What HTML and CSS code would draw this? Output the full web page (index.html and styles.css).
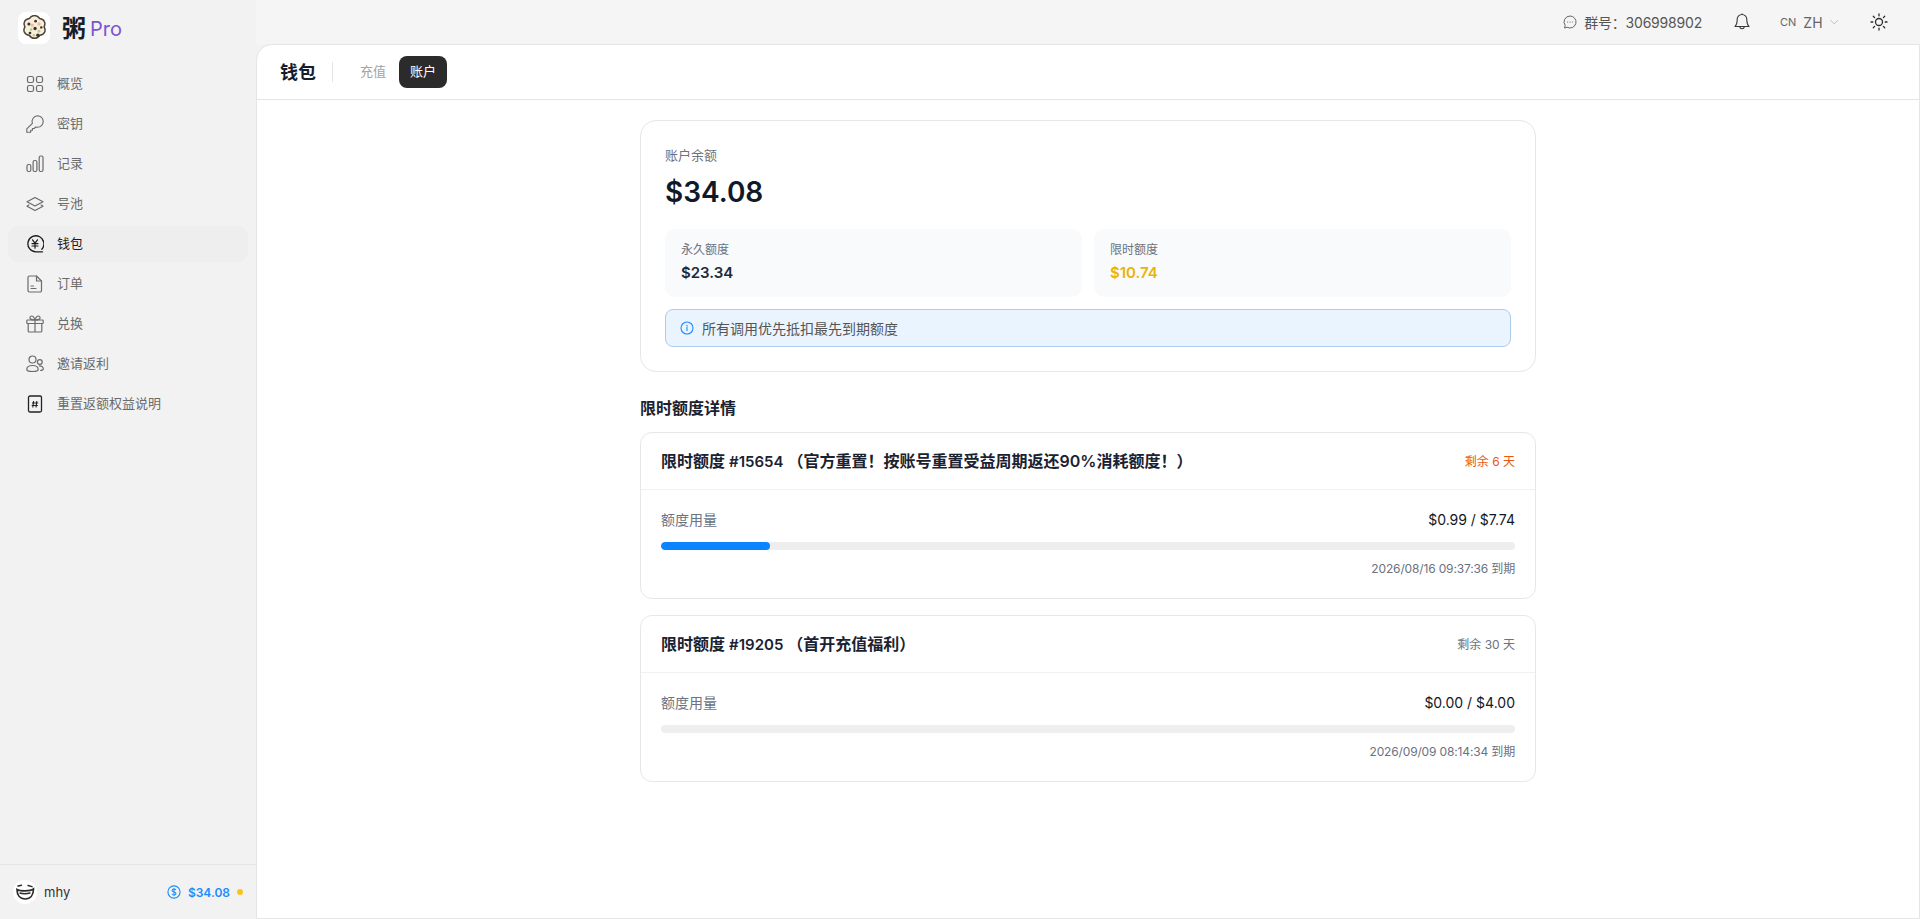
FILE: index.html
```html
<!DOCTYPE html>
<html lang="zh-CN">
<head>
  <meta charset="UTF-8" />
  <meta name="viewport" content="width=device-width, initial-scale=1.0"/>
  <title>钱包</title>
  <link rel="stylesheet" href="styles.css">
</head>
<body>
  <div class="app">
    <!-- 侧边栏 -->
    <aside class="sidebar">
      <div class="brand">
        <div class="logo">
          <svg width="27" height="27" viewBox="1.500 1 23 24">
            <path d="M13 1.500c2.200 0 3.600 1.200 4.600 2.600 1.800.2 3.600 1 4.300 2.900.7 1.700.3 3.300-.4 4.600.9 1.500 1.300 3.200.4 4.900-.9 1.700-2.500 2.400-4.200 2.500-1 1.500-2.500 2.700-4.700 2.700s-3.700-1.200-4.700-2.700c-1.700-.1-3.300-.8-4.200-2.500-.9-1.700-.5-3.400.4-4.900-.7-1.300-1.100-2.900-.4-4.600.7-1.900 2.500-2.700 4.300-2.900 1-1.400 2.400-2.600 4.600-2.600z" fill="#f8eeda" stroke="#4a4438" stroke-width="1.300"/>
            <circle cx="8" cy="9" r="1.400" fill="#3b332a"/><circle cx="14" cy="6.500" r="1.200" fill="#3b332a"/>
            <circle cx="13.500" cy="13" r="1.500" fill="#3b332a"/><circle cx="19" cy="12" r="1.100" fill="#3b332a"/>
            <circle cx="9" cy="17" r="1.200" fill="#3b332a"/><circle cx="16" cy="19" r="1.500" fill="#3b332a"/>
            <circle cx="11" cy="10" r="1.400" fill="#f2b8a8"/><circle cx="17" cy="9" r="1.500" fill="#f2b8a8"/>
            <circle cx="10" cy="14" r="1.200" fill="#b5cf8a"/><circle cx="17" cy="15.500" r="1.300" fill="#b5cf8a"/>
            <circle cx="12.500" cy="19" r="1.200" fill="#b5cf8a"/>
          </svg>
        </div>
        <span class="brand-name">粥</span>
        <span class="brand-pro">Pro</span>
      </div>

      <nav class="nav">
        <a class="nav-item">
          <svg class="nav-icon" viewBox="0 0 18 18" fill="none" stroke="currentColor" stroke-width="1.200"><rect x="1.500" y="1.500" width="6" height="6" rx="1.800"/><rect x="10.500" y="1.500" width="6" height="6" rx="1.800"/><rect x="1.500" y="10.500" width="6" height="6" rx="1.800"/><rect x="10.500" y="10.500" width="6" height="6" rx="1.800"/></svg>
          <span>概览</span>
        </a>
        <a class="nav-item">
          <svg class="nav-icon" viewBox="0 0 18 18" fill="none" stroke="currentColor" stroke-width="1.100" stroke-linejoin="round"><path d="M11.500.8a5.700 5.700 0 0 1 0 11.400c-.6 0-1.200-.1-1.700-.3L8.200 13.500H6.500v1.800H4.700v1.900H.8v-3.300l5.600-5.600a5.700 5.700 0 0 1 5.100-7.500z"/></svg>
          <span>密钥</span>
        </a>
        <a class="nav-item">
          <svg class="nav-icon" viewBox="0 0 18 18" fill="none" stroke="currentColor" stroke-width="1.200"><rect x="1" y="9.500" width="3.800" height="7" rx="1.500"/><rect x="7.100" y="5.500" width="3.800" height="11" rx="1.500"/><rect x="13.200" y="1" width="3.800" height="15.500" rx="1.500"/></svg>
          <span>记录</span>
        </a>
        <a class="nav-item">
          <svg class="nav-icon" viewBox="0 0 18 18" fill="none" stroke="currentColor" stroke-width="1.200" stroke-linejoin="round" stroke-linecap="round"><path d="M9 2.500l8 4.300-8 4.200-8-4.200z"/><path d="M2.800 10L1 11.200l8 4.300 8-4.300L15.200 10"/></svg>
          <span>号池</span>
        </a>
        <a class="nav-item active">
          <svg class="nav-icon" viewBox="0 0 18 18" fill="none" stroke="currentColor" stroke-width="1.300" stroke-linecap="round"><path d="M16.500 16.800h-6.700a8 8 0 1 1 6-2.600"/><path d="M6.500 4.800L9 8.200l2.500-3.400M6 8.600h6M6 11h6M9 8.200v5" stroke-width="1.200"/></svg>
          <span>钱包</span>
        </a>
        <a class="nav-item">
          <svg class="nav-icon" viewBox="0 0 18 18" fill="none" stroke="currentColor" stroke-width="1.200" stroke-linejoin="round" stroke-linecap="round"><path d="M3.500 1h7l5 5v9.500a1.500 1.500 0 0 1-1.500 1.500H3.500A1.500 1.500 0 0 1 2 15.500v-13A1.500 1.500 0 0 1 3.500 1z"/><path d="M10.500 1v5h5M5 13.500h5M5 11h2.500"/></svg>
          <span>订单</span>
        </a>
        <a class="nav-item">
          <svg class="nav-icon" viewBox="0 0 18 18" fill="none" stroke="currentColor" stroke-width="1.200" stroke-linejoin="round"><rect x=".8" y="5" width="16.400" height="3.500" rx=".8"/><path d="M2.200 8.500v7.500a1 1 0 0 0 1 1h11.600a1 1 0 0 0 1-1V8.500M9 5v12M9 5S7.800 1 5.500 1C3.800 1 3.600 3 4.500 4s4.500 1 4.500 1zm0 0s1.200-4 3.500-4c1.700 0 1.900 2 1 3s-4.500 1-4.500 1z"/></svg>
          <span>兑换</span>
        </a>
        <a class="nav-item">
          <svg class="nav-icon" viewBox="0 0 18 18" fill="none" stroke="currentColor" stroke-width="1.200"><circle cx="6.500" cy="4.500" r="3.500"/><circle cx="13.800" cy="7" r="2.400"/><path d="M.8 14.500c0-2.700 2.500-4 5.700-4s5.700 1.300 5.700 4c0 1.500-2.500 2-5.700 2s-5.700-.5-5.700-2zM12.800 11c2.600-.3 4.500.8 4.500 2.800 0 1.200-1.300 1.700-3.200 1.700"/></svg>
          <span>邀请返利</span>
        </a>
        <a class="nav-item">
          <svg class="nav-icon hash" viewBox="0 0 18 18" fill="none" stroke="currentColor"><rect x="2.500" y="1" width="13" height="16" rx="1.500" stroke-width="1.300"/><path d="M7.600 6L6.800 12.500M10.800 6L10 12.500M6 8h6.200M5.700 10.500h6.200" stroke-width="1.100"/></svg>
          <span>重置返额权益说明</span>
        </a>
      </nav>

      <div class="side-footer">
        <div class="user">
          <div class="avatar">
            <svg width="24" height="24" viewBox="0 0 24 24" fill="none" stroke="#2b2b2b" stroke-width="1.400" stroke-linecap="round">
              <path d="M5 6l3.500-.8M15 5.500l4 1.200"/>
              <path d="M4 9.500c3 1.800 13 2 16.500-.5 0 6-3 10-8.300 10S4 15 4 9.500z" stroke-width="1.700"/>
              <path d="M7 13c2 1 7 1 10 0"/>
            </svg>
          </div>
          <span class="user-name">mhy</span>
        </div>
        <div class="balance">
          <svg width="14" height="14" viewBox="0 0 15 15" fill="none" stroke="#1a8cff" stroke-width="1.200"><circle cx="7.500" cy="7.500" r="6.500"/><path d="M9.600 5.400c-.4-.8-1.200-1.100-2.100-1.100-1.200 0-2.100.6-2.100 1.600 0 2.200 4.300 1 4.300 3.200 0 1-.9 1.600-2.200 1.600-1 0-1.900-.4-2.300-1.200M7.500 3.200v8.600" stroke-width="1.100"/></svg>
          <span class="balance-num">$34.08</span>
          <span class="balance-dot"></span>
        </div>
      </div>
    </aside>

    <div class="right">
      <!-- 顶部栏 -->
      <header class="topbar">
        <div class="group-info">
          <svg width="14" height="14" viewBox="0 0 14 14" fill="none" stroke="#666" stroke-width="1"><path d="M7 1a6 6 0 1 1-2.800 11.300L1.500 13l.7-2.500A6 6 0 0 1 7 1z"/><circle cx="4.600" cy="7" r=".6" fill="#666" stroke="none"/><circle cx="7" cy="7" r=".6" fill="#666" stroke="none"/><circle cx="9.400" cy="7" r=".6" fill="#666" stroke="none"/></svg>
          <span>群号：306998902</span>
        </div>
        <svg class="bell" width="16" height="18" viewBox="0 0 16 18" fill="none" stroke="#3a3a3a" stroke-width="1.100" stroke-linejoin="round"><path d="M8 1.500a4.800 4.800 0 0 1 4.800 4.800c0 4 .7 5.700 2.200 7.200H1c1.500-1.500 2.200-3.200 2.200-7.200A4.800 4.800 0 0 1 8 1.500z"/><path d="M5.800 13.500a2.200 2.200 0 0 0 4.400 0"/><path d="M8 .5v1"/></svg>
        <div class="lang">
          <span class="lang-flag">CN</span>
          <span class="lang-code">ZH</span>
          <svg width="9" height="6" viewBox="0 0 9 6" fill="none" stroke="#bbb" stroke-width="1"><path d="M.5 1l4 4 4-4"/></svg>
        </div>
        <svg class="sun" width="18" height="18" viewBox="0 0 18 18" fill="none" stroke="#2b2b2b" stroke-width="1.300" stroke-linecap="round"><circle cx="9" cy="9" r="3.500"/><path d="M9 1v1.800M9 15.200V17M1 9h1.800M15.200 9H17M3.300 3.300l1.300 1.300M13.400 13.400l1.300 1.300M3.300 14.700l1.300-1.300M13.400 4.600l1.300-1.300"/></svg>
      </header>

      <main class="panel">
        <div class="page-head">
          <h1 class="page-title">钱包</h1>
          <div class="head-line"></div>
          <div class="tabs">
            <a class="tab">充值</a>
            <a class="tab current">账户</a>
          </div>
        </div>

        <div class="content">
          <!-- 余额卡片 -->
          <section class="card balance-card">
            <div class="balance-label">账户余额</div>
            <div class="balance-total">$34.08</div>
            <div class="quota-row">
              <div class="quota-box">
                <div class="quota-label">永久额度</div>
                <div class="quota-value">$23.34</div>
              </div>
              <div class="quota-box">
                <div class="quota-label">限时额度</div>
                <div class="quota-value amber">$10.74</div>
              </div>
            </div>
            <div class="notice">
              <svg width="14" height="14" viewBox="0 0 14 14" fill="none" stroke="#1a8cff" stroke-width="1.100"><circle cx="7" cy="7" r="6"/><path d="M7 6.200v3.200M7 4.200v.8" stroke-linecap="round"/></svg>
              <span>所有调用优先抵扣最先到期额度</span>
            </div>
          </section>

          <h2 class="section-title">限时额度详情</h2>

          <section class="card quota-card">
            <div class="quota-head">
              <div class="quota-name">限时额度 <span class="quota-id">#15654</span> （官方重置！按账号重置受益周期返还90%消耗额度！）</div>
              <div class="days urgent">剩余 6 天</div>
            </div>
            <div class="quota-body">
              <div class="usage-row">
                <span class="usage-label">额度用量</span>
                <span class="usage-num">$0.99 / $7.74</span>
              </div>
              <div class="track"><div class="fill" style="width: 12.800%"></div></div>
              <div class="expire">2026/08/16 09:37:36 到期</div>
            </div>
          </section>

          <section class="card quota-card">
            <div class="quota-head">
              <div class="quota-name">限时额度 <span class="quota-id">#19205</span> （首开充值福利）</div>
              <div class="days">剩余 30 天</div>
            </div>
            <div class="quota-body">
              <div class="usage-row">
                <span class="usage-label">额度用量</span>
                <span class="usage-num">$0.00 / $4.00</span>
              </div>
              <div class="track"></div>
              <div class="expire">2026/09/09 08:14:34 到期</div>
            </div>
          </section>
        </div>
      </main>
    </div>
  </div>
</body>
</html>
```

FILE: styles.css
```css
* {
  box-sizing: border-box;
  margin: 0;
  padding: 0;
}
html, body {
  height: 100%;
}
body {
  font-family: Inter, "Noto Sans CJK SC", sans-serif;
  background-color: #f2f2f2;
  color: #111827;
  overflow: hidden;
}
.app {
  display: flex;
  height: 919px;
}

/* 侧边栏 */
.sidebar {
  width: 256px;
  flex-shrink: 0;
  display: flex;
  flex-direction: column;
  background-color: #f2f2f2;
}
.brand {
  height: 66px;
  padding: 12px 0 0 18px;
  display: flex;
  align-items: flex-start;
}
.logo {
  width: 32px;
  height: 32px;
  background-color: #fff;
  border-radius: 8px;
  display: flex;
  align-items: center;
  justify-content: center;
  margin-right: 12px;
}
.brand-name {
  font-size: 24px;
  line-height: 32px;
  font-weight: 700;
  color: #161d2b;
  margin: 1px 4px 0 0;
}
.brand-pro {
  font-size: 20px;
  line-height: 32px;
  color: #7a55d0;
  margin-top: 1px;
}
.nav {
  flex: 1;
  display: flex;
  flex-direction: column;
  gap: 4px;
  padding: 0 8px;
}
.nav-item {
  height: 36px;
  display: flex;
  align-items: center;
  padding-left: 18px;
  border-radius: 10px;
  font-size: 13px;
  color: #6b6b6b;
}
.nav-item span {
  margin-bottom: 4px;
}
.nav-item.active {
  background-color: #eeeeee;
  color: #1c1c1c;
}
.nav-icon {
  width: 18px;
  height: 18px;
  margin-right: 13px;
  flex-shrink: 0;
}
.nav-icon.hash {
  color: #222;
}
.side-footer {
  height: 55px;
  border-top: 1px solid #e5e5e5;
  padding: 0 13px;
  display: flex;
  align-items: center;
  justify-content: space-between;
}
.user {
  display: flex;
  align-items: center;
  gap: 7px;
}
.avatar {
  width: 24px;
  height: 24px;
  background-color: #fff;
  border-radius: 50%;
  overflow: hidden;
}
.user-name {
  font-size: 13px;
  color: #333;
}
.balance {
  display: flex;
  align-items: center;
}
.balance-num {
  font-size: 12px;
  font-weight: 600;
  color: #1a8cff;
  margin-left: 7px;
}
.balance-dot {
  width: 6px;
  height: 6px;
  border-radius: 50%;
  background-color: #fcc419;
  margin-left: 7px;
}

/* 右侧 */
.right {
  flex: 1;
  min-width: 0;
  display: flex;
  flex-direction: column;
}
.topbar {
  height: 44px;
  flex-shrink: 0;
  display: flex;
  align-items: center;
  justify-content: flex-end;
  background-color: #f5f5f5;
  padding-right: 32px;
  font-size: 14px;
  color: #555;
}
.group-info {
  display: flex;
  align-items: center;
  gap: 7px;
  letter-spacing: -0.2px;
}
.bell {
  margin-left: 32px;
}
.lang {
  display: flex;
  align-items: center;
  margin-left: 30px;
  width: 58px;
}
.lang-flag {
  font-size: 11px;
  color: #666;
  margin-right: 7px;
}
.lang-code {
  font-size: 14px;
  color: #666;
  margin-right: 7px;
}
.sun {
  margin-left: 32px;
}
.panel {
  flex: 1;
  min-height: 0;
  background-color: #fff;
  border: 1px solid #e5e5e5;
  border-top-left-radius: 16px;
}
.page-head {
  height: 55px;
  display: flex;
  align-items: center;
  padding-left: 23px;
  border-bottom: 1px solid #e5e5e5;
}
.page-title {
  font-size: 18px;
  font-weight: 700;
  color: #161d2b;
  margin-bottom: 3px;
}
.head-line {
  width: 1px;
  height: 20px;
  background-color: #e5e5e5;
  margin: 0 27px 0 16px;
}
.tabs {
  display: flex;
  align-items: center;
  gap: 13px;
}
.tab {
  font-size: 13px;
  color: #a3a3a3;
  margin-bottom: 3px;
}
.tab.current {
  height: 32px;
  line-height: 30px;
  padding: 0 11px;
  background-color: #2b2b2b;
  border-radius: 8px;
  color: #fff;
  margin-bottom: 0;
}

/* 内容区 */
.content {
  width: 896px;
  margin: 0 auto;
  padding-top: 20px;
}
.card {
  border: 1px solid #e5e7eb;
  background-color: #fff;
}
.balance-card {
  height: 252px;
  border-radius: 16px;
  padding: 24px;
}
.balance-label {
  font-size: 13px;
  line-height: 20px;
  color: #6b7280;
}
.balance-total {
  font-size: 28px;
  line-height: 36px;
  font-weight: 600;
  margin-top: 9px;
  color: #111827;
}
.quota-row {
  display: grid;
  grid-template-columns: 1fr 1fr;
  gap: 12px;
  margin-top: 19px;
}
.quota-box {
  height: 68px;
  background-color: #f9fafb;
  border-radius: 10px;
  padding: 13px 16px;
}
.quota-label {
  font-size: 12px;
  line-height: 16px;
  color: #6b7280;
}
.quota-value {
  font-size: 15px;
  line-height: 20px;
  font-weight: 600;
  margin-top: 5px;
  color: #1f2937;
}
.quota-value.amber {
  color: #eab308;
}
.notice {
  height: 38px;
  margin-top: 12px;
  display: flex;
  align-items: center;
  gap: 8px;
  padding: 0 0 1px 14px;
  background-color: #e9f4ff;
  border: 1px solid #aecdee;
  border-radius: 8px;
  font-size: 14px;
  color: #555;
}
.section-title {
  font-size: 16px;
  line-height: 24px;
  font-weight: 600;
  margin: 24px 0 12px;
  color: #1a2230;
}
.quota-card {
  height: 167px;
  border-radius: 12px;
  margin-bottom: 16px;
}
.quota-head {
  height: 57px;
  display: flex;
  align-items: center;
  justify-content: space-between;
  padding: 0 20px 2px;
  border-bottom: 1px solid #f1f1f3;
}
.quota-name {
  font-size: 16px;
  font-weight: 600;
  color: #1a2230;
}
.quota-id {
  font-size: 15px;
}
.days {
  font-size: 12px;
  color: #6b7280;
}
.days.urgent {
  color: #ea580c;
}
.quota-body {
  padding: 19px 20px 0;
}
.usage-row {
  display: flex;
  justify-content: space-between;
  align-items: center;
  height: 20px;
}
.usage-label {
  font-size: 14px;
  color: #6b7280;
}
.usage-num {
  font-size: 14px;
  color: #111827;
}
.track {
  height: 8px;
  margin-top: 13px;
  background-color: #eeeeee;
  border-radius: 4px;
  overflow: hidden;
}
.fill {
  height: 100%;
  background-color: #0a84ff;
  border-radius: 4px;
}
.expire {
  margin-top: 10px;
  font-size: 12px;
  line-height: 18px;
  text-align: right;
  letter-spacing: -0.15px;
  color: #6b7280;
}
```
